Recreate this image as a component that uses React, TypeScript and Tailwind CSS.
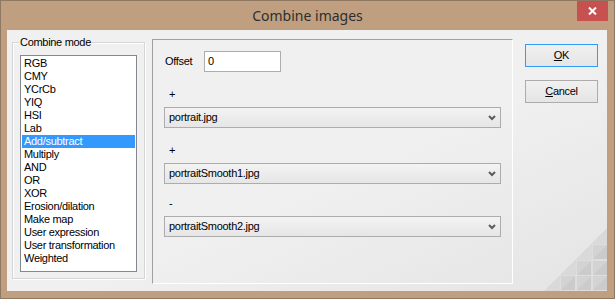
import React from 'react';

const modes = [
  'RGB',
  'CMY',
  'YCrCb',
  'YIQ',
  'HSI',
  'Lab',
  'Add/subtract',
  'Multiply',
  'AND',
  'OR',
  'XOR',
  'Erosion/dilation',
  'Make map',
  'User expression',
  'User transformation',
  'Weighted',
];

function Chevron() {
  return (
    <svg width="8" height="6" viewBox="0 0 8 6" className="shrink-0">
      <polyline points="1,1 4,4 7,1" fill="none" stroke="#5c5c5c" strokeWidth="2" />
    </svg>
  );
}

function Combo({ value }: { value: string }) {
  return (
    <div className="ml-[11px] mt-[6px] w-[337px] h-[21px] border border-[#acacac] bg-gradient-to-b from-[#f3f3f3] to-[#e6e6e6] flex items-center justify-between pl-[4px] pr-[4px]">
      <span className="leading-[13px]">{value}</span>
      <Chevron />
    </div>
  );
}

function SizeGrip() {
  const cells = [
    [48, 16],
    [32, 32],
    [48, 32],
    [16, 47],
    [32, 47],
    [48, 47],
  ];
  return (
    <svg width="63" height="63" viewBox="0 0 63 63" className="absolute right-0 bottom-0">
      <polygon points="0,63 63,63 63,0" fill="#d9d9d9" />
      {cells.map(([x, y], i) => (
        <g key={i}>
          <polygon points={`${x},${y} ${x + 16},${y} ${x},${y + 16}`} fill="#d3d3d3" />
          <polygon points={`${x + 16},${y} ${x + 16},${y + 16} ${x},${y + 16}`} fill="#cbcbcb" />
          <rect x={x + 0.5} y={y + 0.5} width="15" height="15" fill="none" stroke="#dedede" strokeWidth="1" />
        </g>
      ))}
    </svg>
  );
}

export default function App() {
  return (
    <div className="w-[615px] h-[299px] bg-[#bf9f7f] border border-[#8e7862] flex flex-col font-['Liberation_Sans',Arial,sans-serif] text-[11px] tracking-[-0.3px] text-black">
      <div className="relative h-[29px] flex items-center justify-center">
        <span className="font-['Noto_Sans',sans-serif] text-[14px] tracking-normal text-[#2e2e2e] leading-none">Combine images</span>
        <div className="absolute top-0 right-[6px] w-[31px] h-[20px] bg-[#c75050] flex items-center justify-center">
          <svg width="9" height="8" viewBox="0 0 9 8">
            <path d="M1 0.5 L8 7.5 M8 0.5 L1 7.5" stroke="#fff" strokeWidth="2" />
          </svg>
        </div>
      </div>

      <div className="relative ml-[6px] w-[600px] h-[261px] bg-gradient-to-br from-[#f0f0f0] from-55% to-[#e4e4e4] flex items-start">
        <div className="relative ml-[5px] mt-[12px] w-[133px] h-[237px] border border-[#d5d5d5] shadow-[inset_1px_1px_0_#ffffff,1px_1px_0_#ffffff]">
          <span className="absolute -top-[7px] left-[6px] px-[1px] bg-[#f0f0f0] leading-[13px]">Combine mode</span>
          <div className="mt-[12px] ml-[7px] w-[117px] h-[217px] border border-[#828790] bg-white pt-[1px] px-[1px]">
            {modes.map((m) => (
              <div
                key={m}
                className={
                  m === 'Add/subtract'
                    ? 'h-[13px] leading-[13px] pl-[2px] bg-[#3399ff] text-white'
                    : 'h-[13px] leading-[13px] pl-[2px]'
                }
              >
                {m}
              </div>
            ))}
          </div>
        </div>

        <div className="ml-[7px] mt-[9px] w-[361px] h-[245px] border border-t-[#a0a0a0] border-l-[#a0a0a0] border-r-white border-b-white flex flex-col">
          <div className="mt-[11px] ml-[12px] flex items-center h-[21px]">
            <span className="w-[39px] leading-[13px]">Offset</span>
            <div className="w-[77px] h-[21px] border border-[#abadb3] bg-white pl-[3px] flex items-center leading-[13px]">0</div>
          </div>
          <div className="mt-[16px] ml-[16px] h-[13px] leading-[13px]">+</div>
          <Combo value="portrait.jpg" />
          <div className="mt-[16px] ml-[16px] h-[13px] leading-[13px]">+</div>
          <Combo value="portraitSmooth1.jpg" />
          <div className="mt-[13px] ml-[16px] h-[13px] leading-[13px]">-</div>
          <Combo value="portraitSmooth2.jpg" />
        </div>

        <div className="ml-[12px] mt-[14px] flex flex-col gap-[13px]">
          <div className="w-[73px] h-[23px] border border-[#3399ff] bg-gradient-to-b from-[#f0f0f0] to-[#e5e5e5] flex items-center justify-center leading-[13px]">
            <span>
              <span className="underline">O</span>K
            </span>
          </div>
          <div className="w-[73px] h-[23px] border border-[#acacac] bg-gradient-to-b from-[#f0f0f0] to-[#e5e5e5] flex items-center justify-center leading-[13px]">
            <span>
              <span className="underline">C</span>ancel
            </span>
          </div>
        </div>

        <SizeGrip />
      </div>
    </div>
  );
}
